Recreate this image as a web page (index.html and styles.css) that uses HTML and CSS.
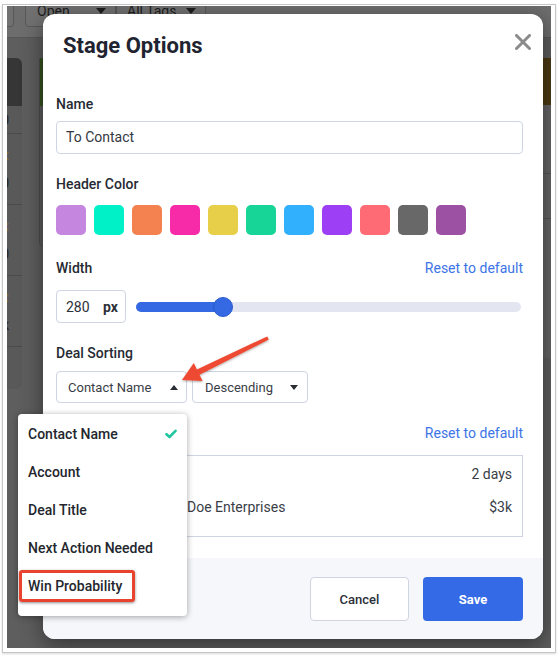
FILE: index.html
```html
<!DOCTYPE html>
<html>
<head>
<meta charset="utf-8">
<link rel="stylesheet" href="styles.css">
</head>
<body>
<div class="frame">
  <div class="screen">
    <div class="app">
      <div class="toolbar">
        <div class="tb-btn tb-stub"></div>
        <div class="tb-btn tb-open"><span>Open</span><i class="tb-tri"></i></div>
        <div class="tb-btn tb-tags"><span>All Tags</span><i class="tb-tri"></i></div>
      </div>
      <div class="board">
        <div class="col col-a">
          <div class="col-head"></div>
          <div class="card-a first"><span>$10</span></div>
          <div class="card-a"><span class="gold">x</span><span>$20</span></div>
          <div class="card-a"><span class="gold">x</span><span>$30</span></div>
          <div class="card-a"><span class="gold">x</span><span>$1k</span></div>
          <div class="card-a last"></div>
        </div>
        <div class="col col-b">
          <div class="col-head"></div>
          <div class="col-body"></div>
        </div>
        <div class="col col-c">
          <div class="col-head"></div>
          <div class="c-text">s</div>
          <div class="c-text">r</div>
          <div class="c-line one"></div>
          <div class="c-line two"></div>
        </div>
      </div>
    </div>

    <div class="modal">
      <div class="modal-head">
        <h1 class="title">Stage Options</h1>
        <svg class="close" viewBox="0 0 16 16" width="16" height="16">
          <path d="M1.5 1.5 L14.5 14.5 M14.5 1.5 L1.5 14.5" stroke="#8b8b8b" stroke-width="3" stroke-linecap="round"/>
        </svg>
      </div>
      <div class="modal-body">
        <div class="label">Name</div>
        <div class="text-input">To Contact</div>

        <div class="label gap-20">Header Color</div>
        <div class="swatches">
          <span class="sw" style="background:#c586e0"></span>
          <span class="sw" style="background:#00f0c8"></span>
          <span class="sw" style="background:#f48250"></span>
          <span class="sw" style="background:#f72aa8"></span>
          <span class="sw" style="background:#e8cf4a"></span>
          <span class="sw" style="background:#17d597"></span>
          <span class="sw" style="background:#31b0fe"></span>
          <span class="sw" style="background:#9d40f5"></span>
          <span class="sw" style="background:#ff6b74"></span>
          <span class="sw" style="background:#686868"></span>
          <span class="sw" style="background:#9c51a2"></span>
        </div>

        <div class="row-between gap-23">
          <div class="label">Width</div>
          <a class="link">Reset to default</a>
        </div>
        <div class="width-row">
          <div class="px-input"><span class="num">280</span><span class="unit">px</span></div>
          <div class="slider">
            <div class="track"><div class="fill"></div></div>
            <div class="thumb"></div>
          </div>
        </div>

        <div class="label gap-20">Deal Sorting</div>
        <div class="sort-row">
          <div class="select sel-field"><span>Contact Name</span><i class="tri up"></i></div>
          <div class="select sel-dir"><span>Descending</span><i class="tri down"></i></div>
        </div>

        <div class="row-between gap-20">
          <div class="label">Card Fields</div>
          <a class="link">Reset to default</a>
        </div>
        <div class="preview">
          <div class="p-row"><span>John Doe</span><span>2 days</span></div>
          <div class="p-row"><span class="p-left"><span class="p-name">John Doe</span>Doe Enterprises</span><span>$3k</span></div>
        </div>
      </div>
      <div class="modal-foot">
        <button class="btn btn-cancel">Cancel</button>
        <button class="btn btn-save">Save</button>
      </div>
    </div>

    <div class="menu">
      <div class="m-item"><span>Contact Name</span>
        <svg class="check" viewBox="0 0 12 10" width="12" height="10"><path d="M1.5 5.2 L4.5 8 L10.5 1.8" fill="none" stroke="#1fc6a0" stroke-width="2.6" stroke-linecap="round" stroke-linejoin="round"/></svg>
      </div>
      <div class="m-item">Account</div>
      <div class="m-item">Deal Title</div>
      <div class="m-item">Next Action Needed</div>
      <div class="m-item">Win Probability</div>
      <div class="hl"></div>
    </div>

    <svg class="arrow" viewBox="7 6 544 642" width="544" height="642">
      <defs>
        <filter id="sh" x="-20%" y="-20%" width="140%" height="140%">
          <feDropShadow dx="0" dy="1" stdDeviation="1.2" flood-color="#000" flood-opacity="0.35"/>
        </filter>
      </defs>
      <polygon filter="url(#sh)" fill="#ee4a30" points="182,380 202.6,381.1 199.5,374.8 268.8,339.6 267.2,336.4 196.9,369.4 193.8,363.1"/>
    </svg>
  </div>
</div>
</body>
</html>
```
FILE: styles.css
```css
html, body {
  margin: 0;
  padding: 0;
  background: #ffffff;
  width: 558px;
  height: 657px;
  overflow: hidden;
  font-family: Roboto, "Liberation Sans", sans-serif;
}

.frame {
  margin: 4px 2px 0 2px;
  border: 1px solid #c6c6c6;
  padding: 1px 4px 4px 4px;
  box-shadow: 0 1px 2px rgba(0,0,0,0.15);
}

.screen {
  position: relative;
  width: 544px;
  height: 642px;
  background: #5e5e5e;
  overflow: hidden;
}

/* ---------- background app ---------- */
.toolbar {
  height: 31px;
  background: #6d6d6d;
  border-bottom: 1px solid #575757;
  display: flex;
  align-items: flex-start;
}
.tb-btn {
  margin-top: -12px;
  height: 33px;
  box-sizing: border-box;
  border: 1px solid #585858;
  border-radius: 4px;
  background: #717171;
  display: flex;
  align-items: center;
  font-size: 14px;
  color: #1e1e1e;
}
.tb-stub { width: 7px; border-left: none; border-radius: 0 4px 4px 0; }
.tb-open { margin-left: 11px; width: 91px; padding-left: 11px; }
.tb-tags { width: 90px; padding-left: 10px; }
.tb-tri {
  width: 0; height: 0;
  border-left: 5px solid transparent;
  border-right: 5px solid transparent;
  border-top: 6px solid #1e1e1e;
  margin-left: auto;
  margin-right: 9px;
}

.board {
  display: flex;
  margin-top: 20px;
  align-items: flex-start;
}
.col-head { height: 48px; }
.col-a {
  width: 16px;
  background: #595959;
  border-radius: 0 6px 6px 0;
  overflow: hidden;
}
.col-a .col-head { background: #363636; }
.card-a {
  height: 71px;
  border-top: 1px solid #4b4b4b;
  box-sizing: border-box;
  display: flex;
  flex-direction: column;
  align-items: flex-end;
  justify-content: center;
  gap: 12px;
  font-size: 14px;
  color: #232323;
  white-space: nowrap;
  padding-right: 13px;
}
.card-a.first { height: 27px; border-top: none; }
.card-a.last { height: 43px; }
.card-a .gold { color: #8a6a1a; }
.col-b {
  margin-left: 17px;
  width: 503px;
  border-left: 1px solid #4c4c4c;
  border-radius: 0 0 0 6px;
  overflow: hidden;
}
.col-b .col-head { background: #35511f; }
.col-b .col-body { height: 142px; background: #5b5b5b; }
.col-c {
  width: 40px;
  background: #656565;
  position: relative;
  height: 300px;
}
.col-c .col-head { background: #4b3a12; height: 47px; }
.c-text { font-size: 14px; color: #202020; margin-left: -3px; height: 25px; line-height: 25px; }
.c-text:first-of-type { margin-top: 27px; }
.c-line { height: 1px; background: #555; }
.c-line.one { margin-top: 18px; }
.c-line.two { margin-top: 44px; }

/* ---------- modal ---------- */
.modal {
  position: absolute;
  left: 36px;
  top: 8px;
  width: 500px;
  height: 625px;
  background: #ffffff;
  border-radius: 12px;
  box-shadow: 0 6px 22px rgba(0,0,0,0.45);
  display: flex;
  flex-direction: column;
  overflow: hidden;
}
.modal-head {
  height: 80px;
  box-sizing: border-box;
  padding: 17px 20px 0 20px;
  position: relative;
  flex: none;
}
.title {
  margin: 0;
  font-size: 22px;
  line-height: 30px;
  font-weight: 700;
  color: #1f2430;
}
.close {
  position: absolute;
  right: 12px;
  top: 20px;
}
.modal-body {
  padding: 0 20px 0 13px;
  flex: none;
}
.label {
  height: 20px;
  line-height: 20px;
  font-size: 14px;
  font-weight: 500;
  color: #262a33;
}
.gap-20 { margin-top: 20px; }
.gap-23 { margin-top: 23px; }
.text-input {
  margin-top: 7px;
  height: 33px;
  box-sizing: border-box;
  border: 1px solid #cfd4e2;
  border-radius: 4px;
  padding: 0 9px;
  line-height: 31px;
  font-size: 14px;
  color: #333842;
}
.swatches {
  margin-top: 11px;
  display: flex;
  gap: 8px;
}
.sw {
  width: 30px;
  height: 30px;
  border-radius: 5px;
  display: block;
}
.row-between {
  display: flex;
  justify-content: space-between;
  align-items: center;
}
.link {
  font-size: 14px;
  line-height: 20px;
  color: #3d74e6;
}
.width-row {
  margin-top: 12px;
  display: flex;
  align-items: center;
  height: 33px;
}
.px-input {
  width: 70px;
  height: 33px;
  box-sizing: border-box;
  border: 1px solid #cfd4e2;
  border-radius: 4px;
  padding-left: 9px;
  display: flex;
  align-items: center;
  font-size: 14px;
  color: #2c3039;
}
.px-input .num { width: 37px; }
.px-input .unit { font-weight: 700; }
.slider {
  margin-left: 10px;
  margin-right: 2px;
  flex: 1;
  position: relative;
  height: 20px;
  display: flex;
  align-items: center;
}
.track {
  width: 100%;
  height: 10px;
  border-radius: 5px;
  background: #e3e6f0;
  overflow: hidden;
}
.fill {
  width: 87px;
  height: 100%;
  background: #3469e3;
}
.thumb {
  position: absolute;
  left: 77px;
  top: 0;
  width: 20px;
  height: 20px;
  box-sizing: border-box;
  border-radius: 50%;
  background: #3469e3;
  border: 1px solid #2a5acc;
}
.sort-row {
  margin-top: 8px;
  display: flex;
  gap: 5px;
}
.select {
  height: 32px;
  box-sizing: border-box;
  border: 1px solid #cfd4e2;
  border-radius: 4px;
  display: flex;
  align-items: center;
  font-size: 13px;
  color: #3a3e47;
}
.sel-field { width: 131px; padding-left: 11px; }
.sel-dir { width: 116px; padding-left: 12px; }
.tri {
  width: 0; height: 0;
  border-left: 4.5px solid transparent;
  border-right: 4.5px solid transparent;
  margin-left: auto;
}
.tri.up { border-bottom: 5px solid #2a2d33; margin-right: 8px; }
.tri.down { border-top: 5px solid #2a2d33; margin-right: 9px; }
.preview {
  margin-top: 12px;
  height: 82px;
  box-sizing: border-box;
  border: 1px solid #cfd4e2;
  padding: 8px 10px 0 10px;
  display: flex;
  flex-direction: column;
  gap: 13px;
}
.p-row {
  display: flex;
  justify-content: space-between;
  line-height: 20px;
  font-size: 14px;
  color: #3a3e47;
}
.p-name { display: inline-block; width: 120px; }
.modal-foot {
  margin-top: auto;
  height: 81px;
  box-sizing: border-box;
  background: #f6f7fb;
  display: flex;
  justify-content: flex-end;
  align-items: flex-start;
  gap: 14px;
  padding: 19px 20px 0 0;
  flex: none;
}
.btn {
  height: 44px;
  border-radius: 4px;
  font-family: Roboto, "Liberation Sans", sans-serif;
  font-size: 13px;
  font-weight: 500;
  cursor: pointer;
}
.btn-cancel {
  width: 99px;
  background: #ffffff;
  border: 1px solid #cfd4e2;
  color: #2b2f38;
}
.btn-save {
  width: 100px;
  background: #356ae6;
  border: none;
  color: #ffffff;
  font-weight: 700;
}

/* ---------- dropdown menu ---------- */
.menu {
  position: absolute;
  left: 11px;
  top: 408px;
  width: 169px;
  height: 202px;
  box-sizing: border-box;
  padding-top: 1px;
  background: #ffffff;
  border-radius: 4px;
  box-shadow: 0 1px 6px rgba(0,0,0,0.35);
}
.m-item {
  height: 38px;
  display: flex;
  align-items: center;
  padding-left: 10px;
  padding-right: 10px;
  font-size: 14px;
  font-weight: 500;
  color: #23262d;
}
.check { margin-left: auto; }
.hl {
  position: absolute;
  left: 1px;
  top: 156px;
  width: 116px;
  height: 32px;
  box-sizing: border-box;
  border: 3px solid #e8432e;
  border-radius: 3px;
  box-shadow: 0 1px 3px rgba(0,0,0,0.45);
}
.arrow {
  position: absolute;
  left: 0;
  top: 0;
  pointer-events: none;
}
```
